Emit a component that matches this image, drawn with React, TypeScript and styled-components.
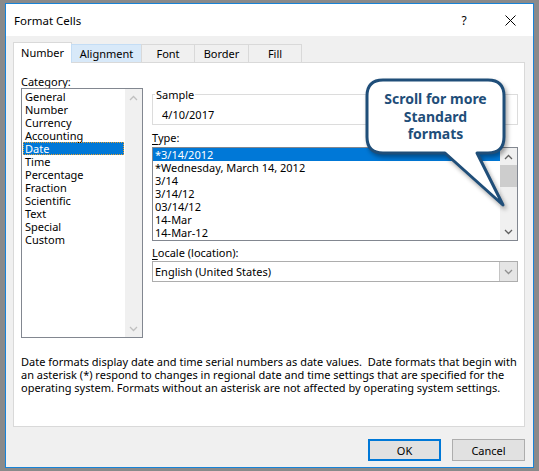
import styled, { createGlobalStyle } from 'styled-components';

const GlobalStyle = createGlobalStyle`
  html, body {
    margin: 0;
    padding: 0;
  }
  body {
    font-family: "Noto Sans", "Open Sans", sans-serif;
    font-size: 11px;
    color: #000;
  }
`;

const Frame = styled.div`
  position: relative;
  width: 539px;
  height: 471px;
  box-sizing: border-box;
  padding: 3px 5px 3px 5px;
  background: #8a8a8a;
`;

const Window = styled.div`
  width: 529px;
  height: 465px;
  box-sizing: border-box;
  border: 1px solid #1883d7;
  background: #f0f0f0;
  display: flex;
  flex-direction: column;
`;

const TitleBar = styled.div`
  height: 32px;
  background: #fff;
  display: flex;
  align-items: center;
  padding-left: 8px;
  font-size: 11.5px;
`;

const Title = styled.div`
  flex: 1;
`;

const TitleButton = styled.div<{ $w: number }>`
  width: ${(p) => p.$w}px;
  display: flex;
  justify-content: center;
  align-items: center;
  font-size: 12px;
`;

const Body = styled.div`
  padding: 6px 8px 0 7px;
  display: flex;
  flex-direction: column;
`;

const TabStrip = styled.div`
  display: flex;
  align-items: flex-end;
  height: 21px;
  margin-bottom: -1px;
  position: relative;
  z-index: 1;
`;

const Tab = styled.div<{ $w: number; $active?: boolean; $hover?: boolean }>`
  width: ${(p) => p.$w}px;
  height: ${(p) => (p.$active ? 21 : 19)}px;
  box-sizing: border-box;
  margin-left: -1px;
  display: flex;
  align-items: center;
  justify-content: center;
  padding-bottom: ${(p) => (p.$active ? 2 : 0)}px;
  border: 1px solid ${(p) => (p.$hover ? '#c4ddf5' : '#d9d9d9')};
  border-bottom: ${(p) => (p.$active ? 'none' : '1px solid #d9d9d9')};
  background: ${(p) => (p.$active ? '#fff' : p.$hover ? '#d8e9f9' : '#f0f0f0')};
  &:first-child {
    margin-left: 0;
  }
`;

const Panel = styled.div`
  height: 365px;
  box-sizing: border-box;
  background: #fff;
  border: 1px solid #d9d9d9;
  padding: 12px 6px 0 7px;
`;

const Columns = styled.div`
  display: flex;
  gap: 9px;
`;

const LeftCol = styled.div`
  width: 122px;
  display: flex;
  flex-direction: column;
`;

const RightCol = styled.div`
  width: 366px;
  display: flex;
  flex-direction: column;
  padding-top: 13px;
`;

const Label = styled.div<{ $mt?: number; $mb?: number }>`
  line-height: 13px;
  margin-top: ${(p) => p.$mt ?? 0}px;
  margin-bottom: ${(p) => p.$mb ?? 0}px;
  u {
    text-decoration: underline;
    text-underline-offset: 2px;
  }
`;

const ListBox = styled.div<{ $h: number }>`
  height: ${(p) => p.$h}px;
  box-sizing: border-box;
  border: 1px solid #828790;
  display: flex;
`;

const ListRows = styled.div<{ $pad?: number }>`
  flex: 1;
  padding-top: ${(p) => p.$pad ?? 0}px;
  overflow: hidden;
`;

const Row = styled.div<{ $selected?: boolean; $focus?: boolean; $inset?: number }>`
  height: 13px;
  line-height: 13px;
  white-space: nowrap;
  box-sizing: border-box;
  margin: 0 ${(p) => p.$inset ?? 0}px;
  padding-left: 2px;
  background: ${(p) => (p.$selected ? '#0078d7' : 'transparent')};
  color: ${(p) => (p.$selected ? '#fff' : '#000')};
  outline: ${(p) => (p.$focus ? '1px dotted #e8a030' : 'none')};
  outline-offset: -1px;
`;

const ScrollBar = styled.div`
  width: 17px;
  background: #f0f0f0;
  display: flex;
  flex-direction: column;
  align-items: stretch;
`;

const ScrollArrow = styled.div`
  height: 17px;
  display: flex;
  align-items: center;
  justify-content: center;
`;

const ScrollTrack = styled.div`
  flex: 1;
  display: flex;
  flex-direction: column;
  align-items: center;
`;

const Thumb = styled.div<{ $top: number; $h: number }>`
  margin-top: ${(p) => p.$top}px;
  width: 17px;
  height: ${(p) => p.$h}px;
  background: #cdcdcd;
`;

const SampleBox = styled.fieldset`
  margin: 0;
  padding: 0 0 2px 2px;
  border: 1px solid #dcdcdc;
  min-width: 0;
  legend {
    padding: 0 1px;
    line-height: 13px;
  }
`;

const SampleValue = styled.div`
  padding: 7px 0 0 7px;
  line-height: 14px;
`;

const Dropdown = styled.div`
  height: 21px;
  box-sizing: border-box;
  border: 1px solid #adadad;
  display: flex;
  align-items: stretch;
`;

const DropdownText = styled.div`
  flex: 1;
  padding-left: 2px;
  display: flex;
  align-items: center;
`;

const DropdownButton = styled.div`
  width: 17px;
  background: #e5e5e5;
  border-left: 1px solid #c4c4c4;
  display: flex;
  align-items: center;
  justify-content: center;
`;

const Description = styled.div`
  margin-top: 17px;
  line-height: 13px;
  white-space: nowrap;
`;

const ButtonRow = styled.div`
  margin-top: 12px;
  display: flex;
  justify-content: flex-end;
  gap: 11px;
`;

const Button = styled.div<{ $default?: boolean }>`
  width: 73px;
  height: 22px;
  box-sizing: border-box;
  background: #e1e1e1;
  border: ${(p) => (p.$default ? '2px solid #0078d7' : '1px solid #adadad')};
  display: flex;
  align-items: center;
  justify-content: center;
`;

const Callout = styled.div`
  position: absolute;
  left: 360px;
  top: 74px;
  width: 150px;
  height: 136px;
  svg {
    position: absolute;
    left: 0;
    top: 0;
    filter: drop-shadow(2px 3px 2px rgba(0, 0, 0, 0.35));
  }
`;

const CalloutText = styled.div`
  position: absolute;
  left: 7px;
  top: 16px;
  width: 137px;
  text-align: center;
  font-weight: 700;
  font-size: 14px;
  line-height: 17.5px;
  color: #1f4e79;
`;

const Chevron = ({ up, color = '#606060' }: { up?: boolean; color?: string }) => (
  <svg width="9" height="6" viewBox="0 0 9 6">
    <polyline
      points={up ? '1,5 4.5,1.5 8,5' : '1,1 4.5,4.5 8,1'}
      fill="none"
      stroke={color}
      strokeWidth="1.3"
    />
  </svg>
);

const categories = [
  'General',
  'Number',
  'Currency',
  'Accounting',
  'Date',
  'Time',
  'Percentage',
  'Fraction',
  'Scientific',
  'Text',
  'Special',
  'Custom',
];

const types = [
  '*3/14/2012',
  '*Wednesday, March 14, 2012',
  '3/14',
  '3/14/12',
  '03/14/12',
  '14-Mar',
  '14-Mar-12',
];

const tabs = [
  { name: 'Number', w: 59 },
  { name: 'Alignment', w: 71 },
  { name: 'Font', w: 54 },
  { name: 'Border', w: 55 },
  { name: 'Fill', w: 54 },
];

export default function App() {
  return (
    <>
      <GlobalStyle />
      <Frame>
        <Window>
          <TitleBar>
            <Title>Format Cells</Title>
            <TitleButton $w={46}>?</TitleButton>
            <TitleButton $w={46}>
              <svg width="11" height="11" viewBox="0 0 11 11">
                <path d="M0.5 0.5 L10.5 10.5 M10.5 0.5 L0.5 10.5" stroke="#000" strokeWidth="1" />
              </svg>
            </TitleButton>
          </TitleBar>
          <Body>
            <TabStrip>
              {tabs.map((t, i) => (
                <Tab key={t.name} $w={t.w} $active={i === 0} $hover={i === 1}>
                  {t.name}
                </Tab>
              ))}
            </TabStrip>
            <Panel>
              <Columns>
                <LeftCol>
                  <Label>
                    <u>C</u>ategory:
                  </Label>
                  <ListBox $h={250}>
                    <ListRows $pad={1}>
                      {categories.map((c) => (
                        <Row key={c} $inset={1} $selected={c === 'Date'} $focus={c === 'Date'}>
                          {c}
                        </Row>
                      ))}
                    </ListRows>
                    <ScrollBar>
                      <ScrollArrow>
                        <Chevron up color="#c0c0c0" />
                      </ScrollArrow>
                      <ScrollTrack />
                      <ScrollArrow>
                        <Chevron color="#c0c0c0" />
                      </ScrollArrow>
                    </ScrollBar>
                  </ListBox>
                </LeftCol>
                <RightCol>
                  <SampleBox>
                    <legend>Sample</legend>
                    <SampleValue>4/10/2017</SampleValue>
                  </SampleBox>
                  <Label $mt={6} $mb={3}>
                    <u>T</u>ype:
                  </Label>
                  <ListBox $h={94}>
                    <ListRows>
                      {types.map((t, i) => (
                        <Row key={t} $selected={i === 0}>
                          {t}
                        </Row>
                      ))}
                    </ListRows>
                    <ScrollBar>
                      <ScrollArrow>
                        <Chevron up />
                      </ScrollArrow>
                      <ScrollTrack>
                        <Thumb $top={0} $h={22} />
                      </ScrollTrack>
                      <ScrollArrow>
                        <Chevron />
                      </ScrollArrow>
                    </ScrollBar>
                  </ListBox>
                  <Label $mt={5} $mb={2}>
                    <u>L</u>ocale (location):
                  </Label>
                  <Dropdown>
                    <DropdownText>English (United States)</DropdownText>
                    <DropdownButton>
                      <Chevron color="#909090" />
                    </DropdownButton>
                  </Dropdown>
                </RightCol>
              </Columns>
              <Description>
                Date formats display date and time serial numbers as date values.&nbsp; Date formats that begin with
                <br />
                an asterisk (*) respond to changes in regional date and time settings that are specified for the
                <br />
                operating system. Formats without an asterisk are not affected by operating system settings.
              </Description>
            </Panel>
            <ButtonRow>
              <Button $default>OK</Button>
              <Button>Cancel</Button>
            </ButtonRow>
          </Body>
        </Window>
        <Callout>
          <svg width="150" height="136" viewBox="360 74 150 136">
            <path
              d="M383 80 H488 Q504 80 504 96 V137 Q504 153 488 153 H477 L503 205 L445 153 H383 Q367 153 367 137 V96 Q367 80 383 80 Z"
              fill="#fff"
              stroke="#1f4e79"
              strokeWidth="3"
              strokeLinejoin="round"
            />
          </svg>
          <CalloutText>
            Scroll for more
            <br />
            Standard
            <br />
            formats
          </CalloutText>
        </Callout>
      </Frame>
    </>
  );
}
